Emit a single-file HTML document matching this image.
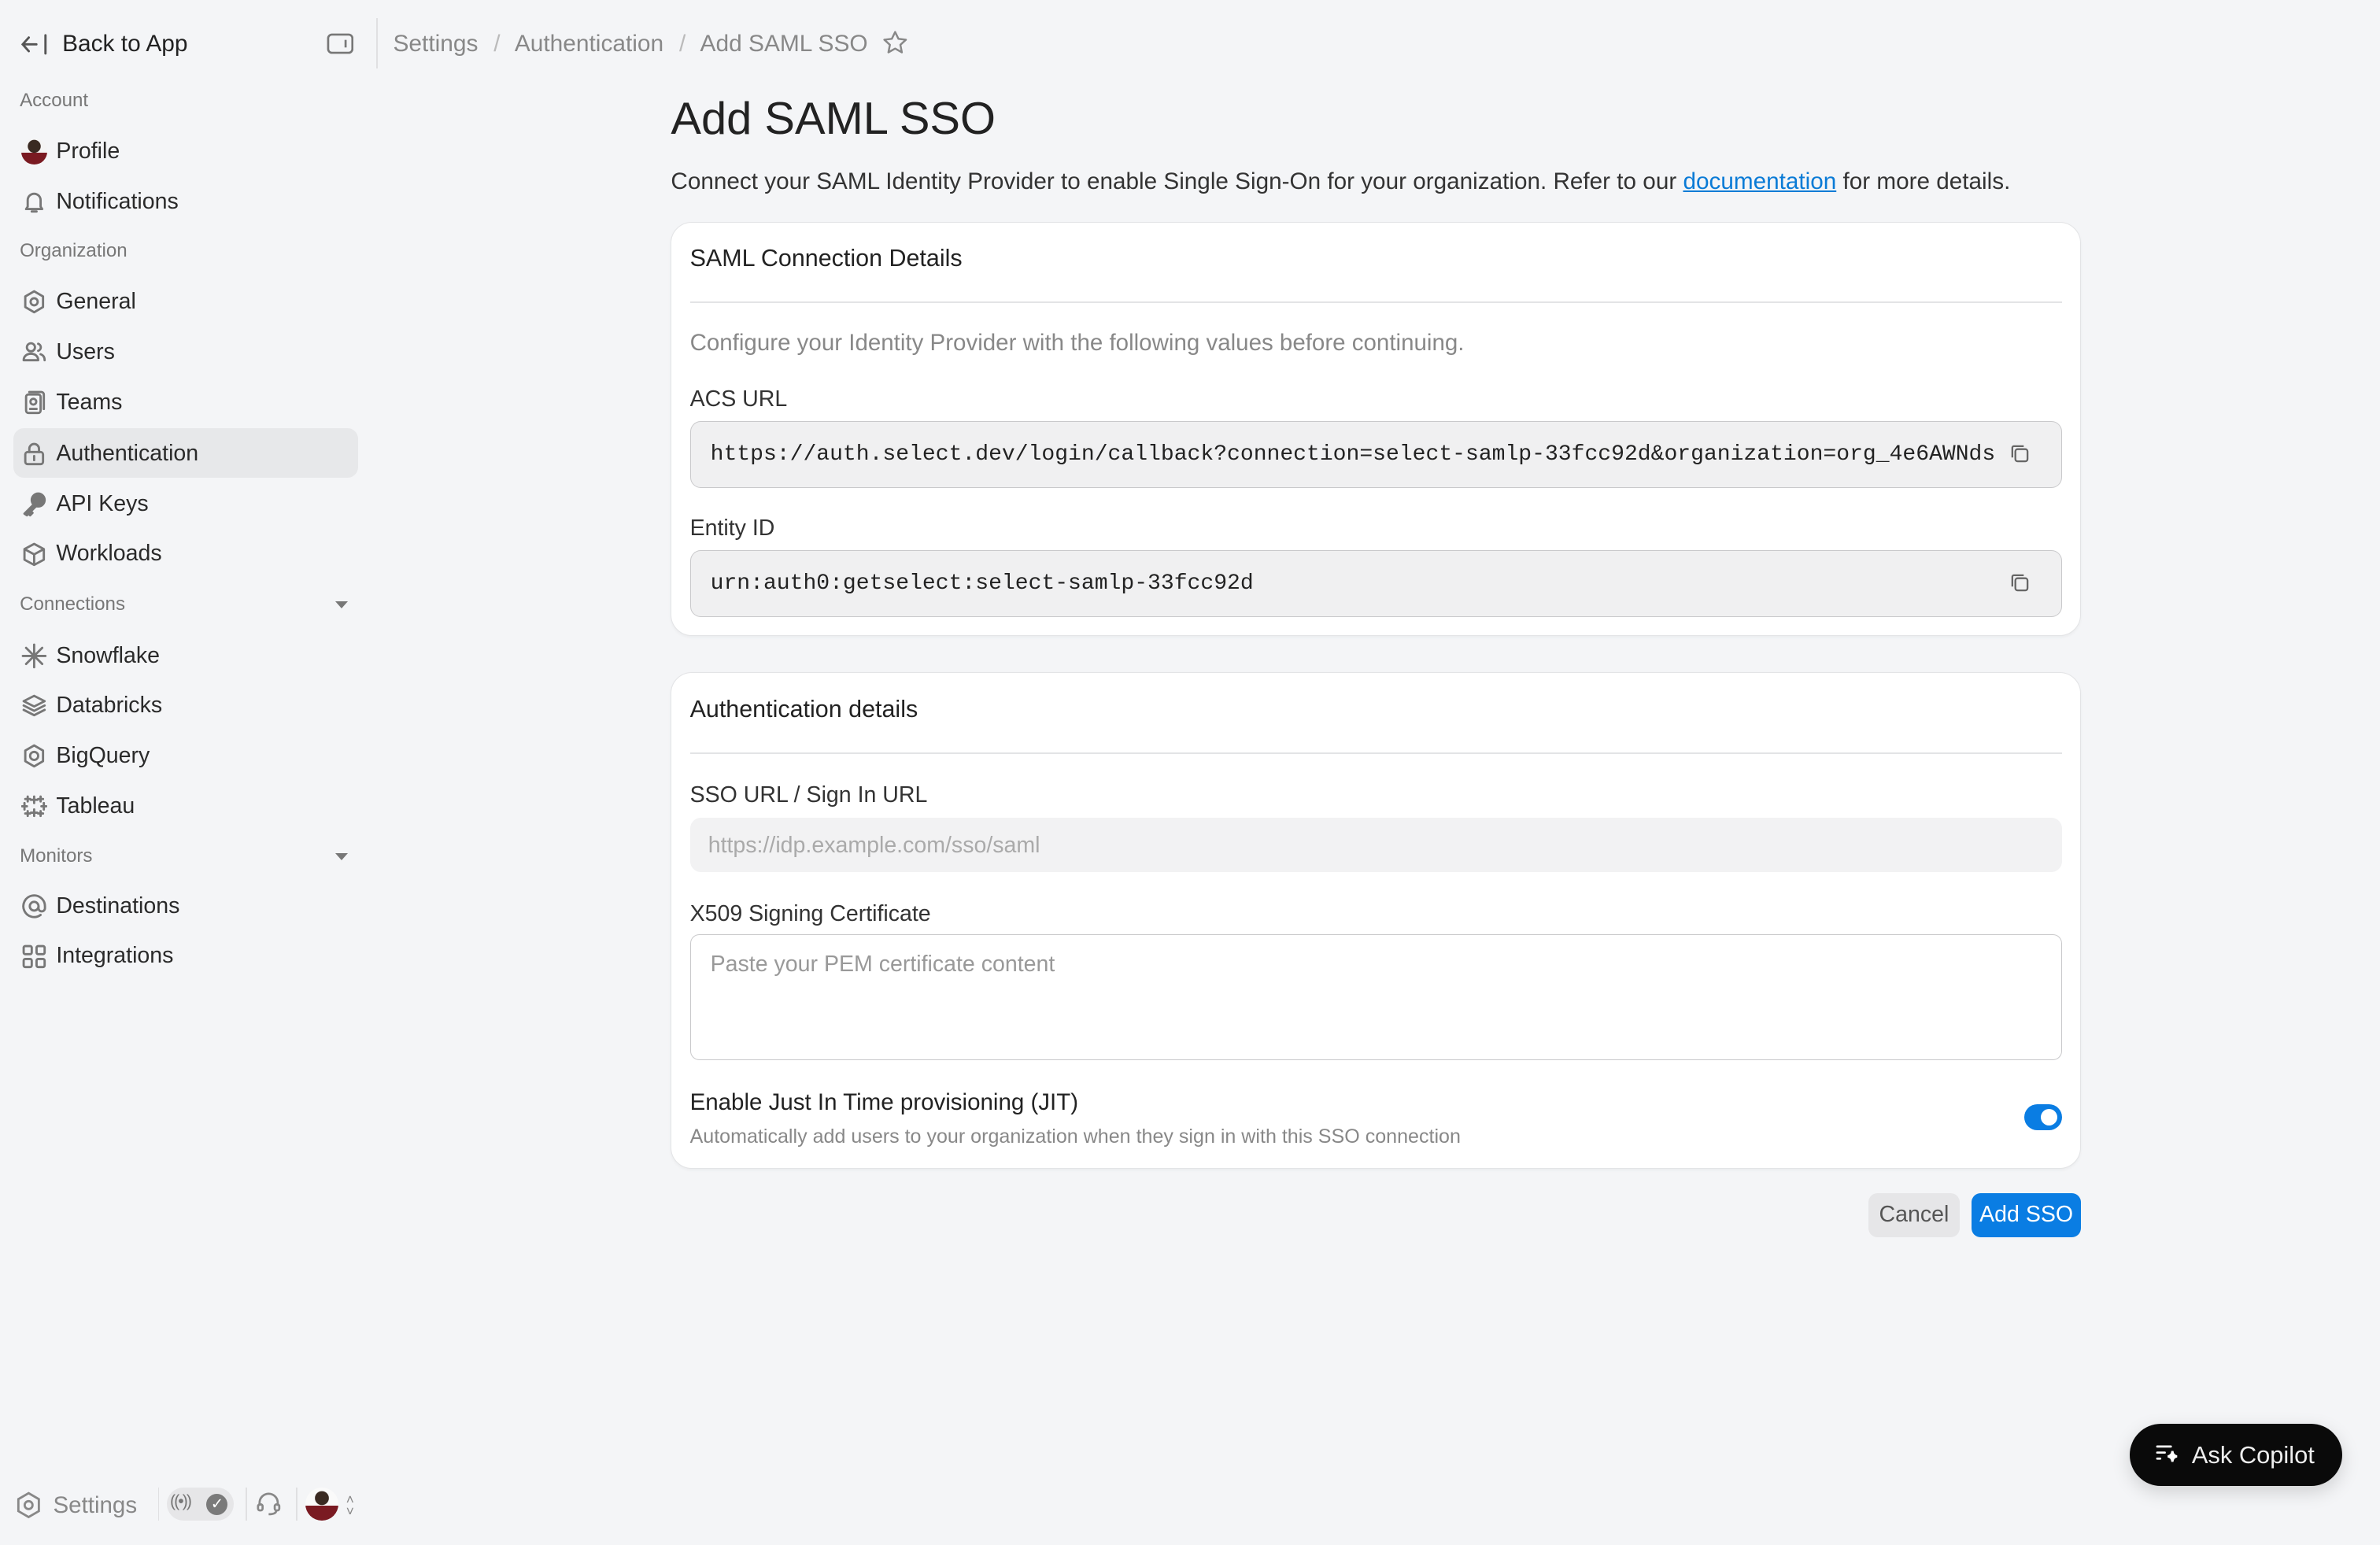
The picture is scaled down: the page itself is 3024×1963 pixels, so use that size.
<!DOCTYPE html>
<html><head><meta charset="utf-8"><style>
html{zoom:1.92857}
*{box-sizing:border-box;margin:0;padding:0}
body{width:1568px;height:1018px;background:#f4f5f7;font-family:"Liberation Sans",sans-serif;color:#222;position:relative;overflow:hidden}
.a{position:absolute}
.sec{position:absolute;left:13px;font-size:12.5px;color:#777;margin-top:1px}
.it{position:absolute;left:9px;width:227px;height:33px;display:flex;align-items:center;padding-left:5px;font-size:14.8px;color:#2a2a2a;padding-top:1px}
.it svg{width:17px;height:17px;margin-right:6px;fill:none;stroke:#777;stroke-width:1.4;stroke-linecap:round;stroke-linejoin:round}
.act{background:#e7e8ea;border-radius:7px}
.card{position:absolute;left:442px;width:929px;background:#fff;border:1px solid #e3e4e6;border-radius:14px;box-shadow:0 1px 2px rgba(0,0,0,.04)}
.ch{position:absolute;left:12px;font-size:15.8px;color:#222}
.hr{position:absolute;left:12px;right:12px;height:1px;background:#e3e4e6}
.lbl{position:absolute;left:12px;font-size:14.8px;color:#333}
.box{position:absolute;left:12px;right:12px;background:#f0f0f1;border:1px solid #c9c9cb;border-radius:7px;font-family:"Liberation Mono",monospace;font-size:14.55px;color:#222;padding-left:13px;display:flex;align-items:center}
.cp{position:absolute;right:20px;top:14px;width:14px;height:14px}
.chev{position:absolute;left:221px;width:0;height:0;border-left:4.5px solid transparent;border-right:4.5px solid transparent;border-top:5px solid #777}
</style></head><body>
<svg class="a" style="left:13px;top:20px" width="20" height="18" viewBox="0 0 20 18" fill="none" stroke="#555" stroke-width="1.5" stroke-linecap="round"><path d="M11 9H2M6 4.5 2 9l4 4.5M17 3v12"/></svg>
<div class="a" style="left:41px;top:20px;font-size:15.5px;color:#222">Back to App</div>
<svg class="a" style="left:215px;top:22px" width="18" height="14" viewBox="0 0 18 14" fill="none" stroke="#777" stroke-width="1.4"><rect x="1" y="1" width="16" height="12" rx="2.5"/><path d="M12.5 4.5v5"/></svg>
<div class="a" style="left:248px;top:12px;width:1px;height:33px;background:#e0e0e2"></div>
<div class="a" style="left:259px;top:20px;font-size:15.5px;color:#888">Settings <span style="margin:0 6px;color:#bbb">/</span> Authentication <span style="margin:0 6px;color:#bbb">/</span> Add SAML SSO</div>
<svg class="a" style="left:581px;top:19px" width="18" height="18" viewBox="0 0 24 24" fill="none" stroke="#888" stroke-width="1.7" stroke-linejoin="round"><path d="M12 2.5l2.9 6 6.6.8-4.9 4.5 1.3 6.6L12 17.1l-5.9 3.3 1.3-6.6-4.9-4.5 6.6-.8z"/></svg>
<div class="sec" style="top:58px">Account</div>
<div class="it" style="top:83px"><span style="width:17px;height:17px;border-radius:50%;background:radial-gradient(circle at 50% 30%,#3a2a22 0 28%,transparent 30%),linear-gradient(#f4f4f4 55%,#7a1a22 55%);margin-right:6px;display:inline-block"></span>Profile</div>
<div class="it" style="top:116px"><svg viewBox="0 0 16 16"><path d="M4 11V7a4 4 0 0 1 8 0v4l1 1.5H3zM6.5 14h3"/></svg>Notifications</div>
<div class="sec" style="top:157px">Organization</div>
<div class="it" style="top:182px"><svg viewBox="0 0 16 16"><path d="M8 1.5l5.5 3.2v6.6L8 14.5l-5.5-3.2V4.7z"/><circle cx="8" cy="8" r="2.2"/></svg>General</div>
<div class="it" style="top:215px"><svg viewBox="0 0 16 16"><circle cx="6" cy="5" r="2.5"/><path d="M1.5 13c0-2.5 2-4 4.5-4s4.5 1.5 4.5 4zM10.5 2.8a2.3 2.3 0 0 1 0 4.4M12 9.3c1.5.5 2.5 1.8 2.5 3.7"/></svg>Users</div>
<div class="it" style="top:248px"><svg viewBox="0 0 16 16"><rect x="3" y="3" width="9" height="11.5" rx="1.5"/><path d="M5 1.5h7.5A1.5 1.5 0 0 1 14 3v9"/><circle cx="7.5" cy="7.5" r="1.8"/><path d="M5.5 12h4"/></svg>Teams</div>
<div class="it act" style="top:282px"><svg viewBox="0 0 16 16"><rect x="2.5" y="7" width="11" height="7.5" rx="1.5"/><path d="M5 7V5a3 3 0 0 1 6 0v2M8 9.5v2.5"/></svg>Authentication</div>
<div class="it" style="top:315px"><svg viewBox="0 0 16 16" style="fill:#777"><circle cx="10.5" cy="5.5" r="4"/><path d="M8 8l-6 6 1.5 1 1-1 1 1 1.5-1.5-1-1 3.5-3.5z"/></svg>API Keys</div>
<div class="it" style="top:348px"><svg viewBox="0 0 16 16"><path d="M8 1.5l6 3.2v6.6L8 14.5l-6-3.2V4.7zM2 4.7L8 8l6-3.3M8 8v6.5"/></svg>Workloads</div>
<div class="sec" style="top:390px">Connections</div><div class="chev" style="top:396px"></div>
<div class="it" style="top:415px"><svg viewBox="0 0 16 16"><path d="M8 1v14M1 8h14M3 3l10 10M13 3 3 13"/></svg>Snowflake</div>
<div class="it" style="top:448px"><svg viewBox="0 0 16 16"><path d="M8 2l6.5 3.3L8 8.6 1.5 5.3zM1.5 8L8 11.3 14.5 8M1.5 10.7 8 14l6.5-3.3"/></svg>Databricks</div>
<div class="it" style="top:481px"><svg viewBox="0 0 16 16"><path d="M8 1.5l5.5 3.2v6.6L8 14.5l-5.5-3.2V4.7z"/><circle cx="8" cy="8" r="2.5"/></svg>BigQuery</div>
<div class="it" style="top:514px"><svg viewBox="0 0 16 16"><path d="M8 2v4M6 4h4M8 10v4M6 12h4M2 6v4M0.5 8h3M14 6v4M12.5 8h3M4 2v3M2.5 3.5h3M12 2v3M10.5 3.5h3M4 11v3M2.5 12.5h3M12 11v3M10.5 12.5h3"/></svg>Tableau</div>
<div class="sec" style="top:556px">Monitors</div><div class="chev" style="top:562px"></div>
<div class="it" style="top:580px"><svg viewBox="0 0 16 16"><circle cx="8" cy="8" r="2.7"/><path d="M10.7 8v1.2a2 2 0 0 0 4 0V8a6.7 6.7 0 1 0-2.7 5.4"/></svg>Destinations</div>
<div class="it" style="top:613px"><svg viewBox="0 0 16 16"><rect x="1.5" y="1.5" width="5" height="5" rx="1"/><rect x="9.5" y="1.5" width="5" height="5" rx="1"/><rect x="1.5" y="9.5" width="5" height="5" rx="1"/><rect x="9.5" y="9.5" width="5" height="5" rx="1"/></svg>Integrations</div>
<svg class="a" style="left:10px;top:982px" width="18" height="19" viewBox="0 0 16 16" fill="none" stroke="#888" stroke-width="1.3"><path d="M8 1l6 3.5v7L8 15l-6-3.5v-7z"/><circle cx="8" cy="8" r="2.3"/></svg>
<div class="a" style="left:35px;top:983px;font-size:15.3px;color:#888">Settings</div>
<div class="a" style="left:104px;top:980px;width:1px;height:22px;background:#e0e0e2"></div>
<div class="a" style="left:110px;top:980px;width:44px;height:22px;border-radius:11px;background:#e6e6e8"></div>
<div class="a" style="left:112px;top:983px;font-size:11px;color:#777;letter-spacing:-1px">((•))</div>
<div class="a" style="left:136px;top:984px;width:14px;height:14px;border-radius:50%;background:#7a7a7a;color:#fff;font-size:10px;text-align:center;line-height:14px">✓</div>
<div class="a" style="left:162px;top:980px;width:1px;height:22px;background:#e0e0e2"></div>
<svg class="a" style="left:168px;top:982px" width="18" height="18" viewBox="0 0 18 18" fill="none" stroke="#888" stroke-width="1.4"><path d="M3 10V8a6 6 0 0 1 12 0v2"/><rect x="2" y="9" width="3" height="4" rx="1.2"/><rect x="13" y="9" width="3" height="4" rx="1.2"/><path d="M14 13c0 2-2 2.5-5 2.5"/></svg>
<div class="a" style="left:195px;top:980px;width:1px;height:22px;background:#e0e0e2"></div>
<div class="a" style="left:201px;top:980px;width:22px;height:22px;border-radius:50%;background:radial-gradient(circle at 50% 32%,#3a2a22 0 24%,transparent 26%),linear-gradient(#fafafa 55%,#7a1a22 55%)"></div>
<div class="a" style="left:228px;top:984px;font-size:9px;color:#888;line-height:8px">˄<br>˅</div>
<div class="a" style="left:442px;top:61px;font-size:30px;color:#222">Add SAML SSO</div>
<div class="a" style="left:442px;top:111px;font-size:15.4px;color:#333">Connect your SAML Identity Provider to enable Single Sign-On for your organization. Refer to our <span style="color:#0a7bd6;text-decoration:underline">documentation</span> for more details.</div>
<div class="card" style="top:146px;height:273px">
 <div class="ch" style="top:15px">SAML Connection Details</div>
 <div class="hr" style="top:52px"></div>
 <div class="lbl" style="top:71px;color:#888;font-size:15.3px">Configure your Identity Provider with the following values before continuing.</div>
 <div class="lbl" style="top:108px">ACS URL</div>
 <div class="box" style="top:131px;height:44px">https://auth.select.dev/login/callback?connection=select-samlp-33fcc92d&amp;organization=org_4e6AWNds
  <svg class="cp" viewBox="0 0 14 14" fill="none" stroke="#666" stroke-width="1.2"><rect x="4" y="4" width="8" height="8" rx="1.5"/><path d="M2 9.5V3a1 1 0 0 1 1-1h6.5"/></svg></div>
 <div class="lbl" style="top:193px">Entity ID</div>
 <div class="box" style="top:216px;height:44px">urn:auth0:getselect:select-samlp-33fcc92d
  <svg class="cp" viewBox="0 0 14 14" fill="none" stroke="#666" stroke-width="1.2"><rect x="4" y="4" width="8" height="8" rx="1.5"/><path d="M2 9.5V3a1 1 0 0 1 1-1h6.5"/></svg></div>
</div>
<div class="card" style="top:443px;height:327px">
 <div class="ch" style="top:15px">Authentication details</div>
 <div class="hr" style="top:52px"></div>
 <div class="lbl" style="top:72px">SSO URL / Sign In URL</div>
 <div class="a" style="left:12px;right:12px;top:95px;height:36px;background:#f2f2f3;border-radius:7px;font-size:14.8px;color:#aaa;padding:10px 12px">https://idp.example.com/sso/saml</div>
 <div class="lbl" style="top:150px">X509 Signing Certificate</div>
 <div class="a" style="left:12px;right:12px;top:172px;height:83px;border:1px solid #c9c9cb;border-radius:6px;font-size:14.8px;color:#999;padding:11px 13px">Paste your PEM certificate content</div>
 <div class="lbl" style="top:274px;font-size:15.3px;color:#222">Enable Just In Time provisioning (JIT)</div>
 <div class="lbl" style="top:298px;font-size:13px;color:#888">Automatically add users to your organization when they sign in with this SSO connection</div>
 <div class="a" style="left:891px;top:284px;width:25px;height:17px;border-radius:9px;background:#0a7de3"><div class="a" style="left:11px;top:3px;width:11px;height:11px;border-radius:50%;background:#fff"></div></div>
</div>
<div class="a" style="left:1231px;top:786px;width:60px;height:29px;border-radius:6px;background:#e6e6e8;font-size:14.8px;color:#555;text-align:center;line-height:29px">Cancel</div>
<div class="a" style="left:1299px;top:786px;width:72px;height:29px;border-radius:6px;background:#0a7de3;font-size:14.8px;color:#fff;text-align:center;line-height:29px">Add SSO</div>
<div class="a" style="left:1403px;top:938px;width:140px;height:41px;border-radius:21px;background:#0a0a0a;box-shadow:0 4px 12px rgba(0,0,0,.15);color:#eee;font-size:16px;line-height:41px;padding-left:41px">Ask Copilot</div>
<svg class="a" style="left:1420px;top:951px" width="17" height="15" viewBox="0 0 17 15" fill="none" stroke="#fff" stroke-width="1.4" stroke-linecap="round"><path d="M1 2h9M1 6h5M1 10h2"/><path d="M11 5c.3 2 1 3 3 3.5-2 .5-2.7 1.5-3 3.5-.3-2-1-3-3-3.5 2-.5 2.7-1.5 3-3.5z" fill="#fff"/></svg>
</body></html>
